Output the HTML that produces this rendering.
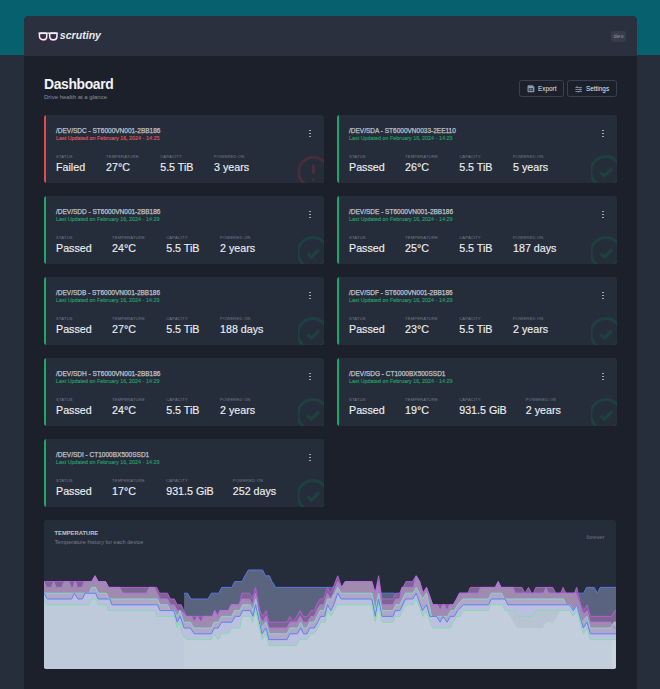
<!DOCTYPE html>
<html><head><meta charset="utf-8">
<style>
*{margin:0;padding:0;box-sizing:border-box}
html,body{width:660px;height:689px;overflow:hidden;background:#262d3b;font-family:"Liberation Sans",sans-serif}
.teal{position:absolute;left:0;top:0;width:660px;height:55.3px;background:#06606e}
.panel{position:absolute;left:24px;top:16px;width:613px;height:700px;background:#1c202b;border-radius:5px 5px 0 0;overflow:hidden}
.hdr{position:absolute;left:0;top:0;width:613px;height:40px;background:#2a303d}
.logo{position:absolute;left:35.8px;top:13px;font-weight:bold;font-style:italic;font-size:10.6px;color:#e8eaee}
.dev{position:absolute;left:587px;top:14.5px;width:15px;height:11.5px;background:#353c4a;border-radius:2px;color:#959ca8;font-size:5.8px;text-align:center;line-height:11.5px;letter-spacing:0.4px;text-indent:0.4px}
.title{position:absolute;left:20px;top:60.3px;font-size:13.9px;font-weight:bold;color:#f1f3f5;letter-spacing:-0.35px}
.sub{position:absolute;left:20px;top:78px;font-size:6px;color:#8a919d}
.btn{position:absolute;border:1px solid #394150;border-radius:2.5px;color:#e3e6ea;font-size:6.4px;line-height:14.3px}
.card{position:absolute;width:279.5px;height:67.5px;background:#262d3a;border-radius:3px;overflow:hidden}
.card .bl{position:absolute;left:0;top:0;width:2px;height:100%}
.card.f .bl{background:#e5484d}
.card.p .bl{background:#1ea76b}
.ct{position:absolute;left:12px;top:11.7px;font-size:6.5px;color:#bcc1ca;white-space:nowrap;-webkit-text-stroke:0.25px #bcc1ca}
.cu{position:absolute;left:12px;top:19.5px;font-size:5.4px;white-space:nowrap;-webkit-text-stroke:0.1px currentColor}
.card.f .cu{color:#e25a5f}
.card.p .cu{color:#25a46c}
.st{position:absolute;top:38.5px;left:12px;display:flex}
.st > div{margin-right:0}
.lb{font-size:4.1px;color:#737c8b;letter-spacing:0.2px;height:6px;line-height:6.4px;white-space:nowrap}
.vl{font-size:10.7px;color:#eceef1;white-space:nowrap;margin-top:1px;-webkit-text-stroke:0.15px #eceef1}
.keb{position:absolute;left:265px;top:14.7px;width:2px;height:8px}
.keb i{position:absolute;left:0;width:2px;height:1.6px;background:#b3b9c2;border-radius:1px}
.ico{position:absolute;left:252px;top:40px}
</style></head><body>
<div class="teal"></div>
<div class="panel">
  <div class="hdr">
    <svg style="position:absolute;left:13.5px;top:15.5px" width="21" height="10" viewBox="0 0 21 10"><g fill="none" stroke-width="1.3" stroke-linejoin="round"><g stroke="#d9475a" transform="translate(0.25,0.45)"><path d="M2.65 1.2 H7.55 Q8.75 1.2 8.75 2.6 V4.2 C8.75 6.5 7.15 7.75 5.10 7.75 C3.05 7.75 1.45 6.5 1.45 4.2 V2.6 Q1.45 1.2 2.65 1.2 Z"/><path d="M12.85 1.2 H17.75 Q18.95 1.2 18.95 2.6 V4.2 C18.95 6.5 17.35 7.75 15.30 7.75 C13.25 7.75 11.65 6.5 11.65 4.2 V2.6 Q11.65 1.2 12.85 1.2 Z"/></g><g stroke="#5a6ae0" transform="translate(-0.25,-0.35)"><path d="M2.65 1.2 H7.55 Q8.75 1.2 8.75 2.6 V4.2 C8.75 6.5 7.15 7.75 5.10 7.75 C3.05 7.75 1.45 6.5 1.45 4.2 V2.6 Q1.45 1.2 2.65 1.2 Z"/><path d="M12.85 1.2 H17.75 Q18.95 1.2 18.95 2.6 V4.2 C18.95 6.5 17.35 7.75 15.30 7.75 C13.25 7.75 11.65 6.5 11.65 4.2 V2.6 Q11.65 1.2 12.85 1.2 Z"/></g><g stroke="#f4f4f8"><path d="M2.65 1.2 H7.55 Q8.75 1.2 8.75 2.6 V4.2 C8.75 6.5 7.15 7.75 5.10 7.75 C3.05 7.75 1.45 6.5 1.45 4.2 V2.6 Q1.45 1.2 2.65 1.2 Z"/><path d="M12.85 1.2 H17.75 Q18.95 1.2 18.95 2.6 V4.2 C18.95 6.5 17.35 7.75 15.30 7.75 C13.25 7.75 11.65 6.5 11.65 4.2 V2.6 Q11.65 1.2 12.85 1.2 Z"/><path d="M0.4 1.2 H20.1" stroke-width="1.2"/></g></g></svg>
    <div class="logo">scrutiny</div>
    <div class="dev">dev</div>
  </div>
  <div class="title">Dashboard</div>
  <div class="sub">Drive health at a glance</div>
  <div class="btn" style="left:495px;top:64px;width:45px;height:17px"><svg style="position:absolute;left:6.5px;top:3.7px" width="8" height="8" viewBox="0 0 8 8"><path d="M0.5 1.2 Q0.5 0.2 1.5 0.2 H5.6 L7.4 2 V6.4 Q7.4 7.2 6.4 7.2 H1.5 Q0.5 7.2 0.5 6.2 Z" fill="#8a95a8"/><rect x="1.6" y="3.1" width="4.4" height="2.9" fill="#3a4152"/><rect x="2.6" y="1.9" width="2.6" height="0.6" fill="#aab4c6"/><circle cx="3.8" cy="4.6" r="0.7" fill="#9aa5b8"/></svg><span style="position:absolute;left:18px;top:0.8px">Export</span></div>
  <div class="btn" style="left:543px;top:64px;width:50px;height:17px"><svg style="position:absolute;left:6.5px;top:4px" width="8" height="8" viewBox="0 0 8 8" stroke="#8a95a8" stroke-width="0.8"><path d="M0.4 2.5 H7 M0.4 4.5 H7 M0.4 6.5 H7"/><path d="M2 1.3 V3.1 M5.1 3.6 V5.4 M3.2 5.9 V7.5" stroke-width="1.1"/></svg><span style="position:absolute;left:18px;top:0.8px">Settings</span></div>
</div>
<div class="card f" style="left:44px;top:115px"><div class="bl"></div><div class="ct">/DEV/SDC - ST6000VN001-2BB186</div><div class="cu">Last Updated on February 16, 2024 - 14:25</div><div style="position:absolute;left:12px;top:38.5px"><div class="lb">STATUS</div><div class="vl">Failed</div></div><div style="position:absolute;left:62px;top:38.5px"><div class="lb">TEMPERATURE</div><div class="vl">27°C</div></div><div style="position:absolute;left:116.2px;top:38.5px"><div class="lb">CAPACITY</div><div class="vl">5.5 TiB</div></div><div style="position:absolute;left:170px;top:38.5px"><div class="lb">POWERED ON</div><div class="vl">3 years</div></div><div class="keb"><i style="top:0"></i><i style="top:3px"></i><i style="top:6px"></i></div><svg class="ico" width="40" height="40" viewBox="0 0 40 40"><circle cx="17.5" cy="17" r="14.8" fill="none" stroke="#472e3a" stroke-width="3"/><rect x="16" y="9" width="3" height="10" rx="1.5" fill="#472e3a"/><circle cx="17.5" cy="24.5" r="1.6" fill="#472e3a"/></svg></div><div class="card p" style="left:337px;top:115px"><div class="bl"></div><div class="ct">/DEV/SDA - ST6000VN0033-2EE110</div><div class="cu">Last Updated on February 16, 2024 - 14:29</div><div style="position:absolute;left:12px;top:38.5px"><div class="lb">STATUS</div><div class="vl">Passed</div></div><div style="position:absolute;left:68px;top:38.5px"><div class="lb">TEMPERATURE</div><div class="vl">26°C</div></div><div style="position:absolute;left:122.2px;top:38.5px"><div class="lb">CAPACITY</div><div class="vl">5.5 TiB</div></div><div style="position:absolute;left:176px;top:38.5px"><div class="lb">POWERED ON</div><div class="vl">5 years</div></div><div class="keb"><i style="top:0"></i><i style="top:3px"></i><i style="top:6px"></i></div><svg class="ico" style="left:253.5px" width="40" height="40" viewBox="0 0 40 40"><circle cx="14.8" cy="16.6" r="15" fill="none" stroke="#1c413f" stroke-width="3"/><path d="M9.5 17.5 L13.5 21 L21 13.5" fill="none" stroke="#1c413f" stroke-width="3.2"/></svg></div><div class="card p" style="left:44px;top:196px"><div class="bl"></div><div class="ct">/DEV/SDD - ST6000VN001-2BB186</div><div class="cu">Last Updated on February 16, 2024 - 14:29</div><div style="position:absolute;left:12px;top:38.5px"><div class="lb">STATUS</div><div class="vl">Passed</div></div><div style="position:absolute;left:68px;top:38.5px"><div class="lb">TEMPERATURE</div><div class="vl">24°C</div></div><div style="position:absolute;left:122.2px;top:38.5px"><div class="lb">CAPACITY</div><div class="vl">5.5 TiB</div></div><div style="position:absolute;left:176px;top:38.5px"><div class="lb">POWERED ON</div><div class="vl">2 years</div></div><div class="keb"><i style="top:0"></i><i style="top:3px"></i><i style="top:6px"></i></div><svg class="ico" style="left:253.5px" width="40" height="40" viewBox="0 0 40 40"><circle cx="14.8" cy="16.6" r="15" fill="none" stroke="#1c413f" stroke-width="3"/><path d="M9.5 17.5 L13.5 21 L21 13.5" fill="none" stroke="#1c413f" stroke-width="3.2"/></svg></div><div class="card p" style="left:337px;top:196px"><div class="bl"></div><div class="ct">/DEV/SDE - ST6000VN001-2BB186</div><div class="cu">Last Updated on February 16, 2024 - 14:29</div><div style="position:absolute;left:12px;top:38.5px"><div class="lb">STATUS</div><div class="vl">Passed</div></div><div style="position:absolute;left:68px;top:38.5px"><div class="lb">TEMPERATURE</div><div class="vl">25°C</div></div><div style="position:absolute;left:122.2px;top:38.5px"><div class="lb">CAPACITY</div><div class="vl">5.5 TiB</div></div><div style="position:absolute;left:176px;top:38.5px"><div class="lb">POWERED ON</div><div class="vl">187 days</div></div><div class="keb"><i style="top:0"></i><i style="top:3px"></i><i style="top:6px"></i></div><svg class="ico" style="left:253.5px" width="40" height="40" viewBox="0 0 40 40"><circle cx="14.8" cy="16.6" r="15" fill="none" stroke="#1c413f" stroke-width="3"/><path d="M9.5 17.5 L13.5 21 L21 13.5" fill="none" stroke="#1c413f" stroke-width="3.2"/></svg></div><div class="card p" style="left:44px;top:277px"><div class="bl"></div><div class="ct">/DEV/SDB - ST6000VN001-2BB186</div><div class="cu">Last Updated on February 16, 2024 - 14:29</div><div style="position:absolute;left:12px;top:38.5px"><div class="lb">STATUS</div><div class="vl">Passed</div></div><div style="position:absolute;left:68px;top:38.5px"><div class="lb">TEMPERATURE</div><div class="vl">27°C</div></div><div style="position:absolute;left:122.2px;top:38.5px"><div class="lb">CAPACITY</div><div class="vl">5.5 TiB</div></div><div style="position:absolute;left:176px;top:38.5px"><div class="lb">POWERED ON</div><div class="vl">188 days</div></div><div class="keb"><i style="top:0"></i><i style="top:3px"></i><i style="top:6px"></i></div><svg class="ico" style="left:253.5px" width="40" height="40" viewBox="0 0 40 40"><circle cx="14.8" cy="16.6" r="15" fill="none" stroke="#1c413f" stroke-width="3"/><path d="M9.5 17.5 L13.5 21 L21 13.5" fill="none" stroke="#1c413f" stroke-width="3.2"/></svg></div><div class="card p" style="left:337px;top:277px"><div class="bl"></div><div class="ct">/DEV/SDF - ST6000VN001-2BB186</div><div class="cu">Last Updated on February 16, 2024 - 14:29</div><div style="position:absolute;left:12px;top:38.5px"><div class="lb">STATUS</div><div class="vl">Passed</div></div><div style="position:absolute;left:68px;top:38.5px"><div class="lb">TEMPERATURE</div><div class="vl">23°C</div></div><div style="position:absolute;left:122.2px;top:38.5px"><div class="lb">CAPACITY</div><div class="vl">5.5 TiB</div></div><div style="position:absolute;left:176px;top:38.5px"><div class="lb">POWERED ON</div><div class="vl">2 years</div></div><div class="keb"><i style="top:0"></i><i style="top:3px"></i><i style="top:6px"></i></div><svg class="ico" style="left:253.5px" width="40" height="40" viewBox="0 0 40 40"><circle cx="14.8" cy="16.6" r="15" fill="none" stroke="#1c413f" stroke-width="3"/><path d="M9.5 17.5 L13.5 21 L21 13.5" fill="none" stroke="#1c413f" stroke-width="3.2"/></svg></div><div class="card p" style="left:44px;top:358px"><div class="bl"></div><div class="ct">/DEV/SDH - ST6000VN001-2BB186</div><div class="cu">Last Updated on February 16, 2024 - 14:29</div><div style="position:absolute;left:12px;top:38.5px"><div class="lb">STATUS</div><div class="vl">Passed</div></div><div style="position:absolute;left:68px;top:38.5px"><div class="lb">TEMPERATURE</div><div class="vl">24°C</div></div><div style="position:absolute;left:122.2px;top:38.5px"><div class="lb">CAPACITY</div><div class="vl">5.5 TiB</div></div><div style="position:absolute;left:176px;top:38.5px"><div class="lb">POWERED ON</div><div class="vl">2 years</div></div><div class="keb"><i style="top:0"></i><i style="top:3px"></i><i style="top:6px"></i></div><svg class="ico" style="left:253.5px" width="40" height="40" viewBox="0 0 40 40"><circle cx="14.8" cy="16.6" r="15" fill="none" stroke="#1c413f" stroke-width="3"/><path d="M9.5 17.5 L13.5 21 L21 13.5" fill="none" stroke="#1c413f" stroke-width="3.2"/></svg></div><div class="card p" style="left:337px;top:358px"><div class="bl"></div><div class="ct">/DEV/SDG - CT1000BX500SSD1</div><div class="cu">Last Updated on February 16, 2024 - 14:29</div><div style="position:absolute;left:12px;top:38.5px"><div class="lb">STATUS</div><div class="vl">Passed</div></div><div style="position:absolute;left:68px;top:38.5px"><div class="lb">TEMPERATURE</div><div class="vl">19°C</div></div><div style="position:absolute;left:122.2px;top:38.5px"><div class="lb">CAPACITY</div><div class="vl">931.5 GiB</div></div><div style="position:absolute;left:188.8px;top:38.5px"><div class="lb">POWERED ON</div><div class="vl">2 years</div></div><div class="keb"><i style="top:0"></i><i style="top:3px"></i><i style="top:6px"></i></div><svg class="ico" style="left:253.5px" width="40" height="40" viewBox="0 0 40 40"><circle cx="14.8" cy="16.6" r="15" fill="none" stroke="#1c413f" stroke-width="3"/><path d="M9.5 17.5 L13.5 21 L21 13.5" fill="none" stroke="#1c413f" stroke-width="3.2"/></svg></div><div class="card p" style="left:44px;top:439px"><div class="bl"></div><div class="ct">/DEV/SDI - CT1000BX500SSD1</div><div class="cu">Last Updated on February 16, 2024 - 14:29</div><div style="position:absolute;left:12px;top:38.5px"><div class="lb">STATUS</div><div class="vl">Passed</div></div><div style="position:absolute;left:68px;top:38.5px"><div class="lb">TEMPERATURE</div><div class="vl">17°C</div></div><div style="position:absolute;left:122.2px;top:38.5px"><div class="lb">CAPACITY</div><div class="vl">931.5 GiB</div></div><div style="position:absolute;left:188.8px;top:38.5px"><div class="lb">POWERED ON</div><div class="vl">252 days</div></div><div class="keb"><i style="top:0"></i><i style="top:3px"></i><i style="top:6px"></i></div><svg class="ico" style="left:253.5px" width="40" height="40" viewBox="0 0 40 40"><circle cx="14.8" cy="16.6" r="15" fill="none" stroke="#1c413f" stroke-width="3"/><path d="M9.5 17.5 L13.5 21 L21 13.5" fill="none" stroke="#1c413f" stroke-width="3.2"/></svg></div><div style="position:absolute;left:44px;top:519.5px;width:572px;height:149.5px;background:#262d3a;border-radius:3px;overflow:hidden">
<div style="position:absolute;left:10.5px;top:10.8px;font-size:5.8px;font-weight:bold;color:#bfc4cc;letter-spacing:0px">TEMPERATURE</div>
<div style="position:absolute;left:10.5px;top:19.3px;font-size:5.6px;color:#757d8b">Temperature history for each device</div>
<div style="position:absolute;left:542.6px;top:14.3px;font-size:5.7px;color:#6f7785">forever</div>
</div>
<svg style="position:absolute;left:0;top:0" width="660" height="689" viewBox="0 0 660 689"><defs><clipPath id="cc"><rect x="44" y="519.5" width="572" height="149.5" rx="3"/></clipPath></defs><g clip-path="url(#cc)">
<clipPath id="ce"><polygon points="44.0,670 44.0,599.0 46.8,604.8 89.2,604.8 91.3,599.0 96.0,599.0 98.7,604.8 106.2,604.8 108.8,610.6 155.0,610.6 157.3,616.4 174.3,616.4 177.2,628.0 179.5,622.2 182.0,633.8 186.4,639.6 211.4,639.6 214.2,633.8 218.2,639.6 221.6,633.8 228.4,633.8 231.2,628.0 239.8,628.0 242.0,616.4 250.1,616.4 252.4,622.2 255.8,610.6 262.0,639.6 266.0,633.8 268.9,645.4 296.7,645.4 299.5,639.6 307.0,639.6 310.9,633.8 314.3,633.8 317.7,628.0 320.7,622.2 325.2,622.2 327.5,610.6 330.9,616.4 337.2,604.8 371.8,604.8 375.2,622.2 378.6,604.8 382.0,622.2 393.0,622.2 395.2,616.4 399.8,616.4 405.5,604.8 412.8,604.8 416.2,599.0 423.0,616.4 425.9,610.6 432.7,628.0 450.3,628.0 453.2,622.2 456.6,616.4 460.0,616.4 463.0,610.6 488.0,610.6 490.8,604.8 502.7,604.8 505.0,610.6 515.2,610.6 518.6,616.4 533.0,616.4 535.2,610.6 569.9,610.6 573.3,616.4 576.7,610.6 583.5,633.8 587.0,628.0 590.3,639.6 616.0,639.6 616.0,670"/></clipPath>
<polygon points="184.1,670 184.1,593.2 187.5,593.2 190.9,599.0 208.0,599.0 211.4,593.2 218.8,593.2 221.6,587.4 231.8,587.4 234.7,581.6 242.0,581.6 244.9,575.8 248.4,570.0 262.6,570.0 265.5,575.8 269.4,575.8 272.0,581.6 275.7,587.4 354.8,587.4 357.6,593.2 394.7,593.2 400.0,610.6 575.0,610.6 578.4,593.2 583.8,593.2 586.5,587.4 594.2,587.4 597.4,593.2 600.2,587.4 616.0,587.4 616.0,670" fill="#5b647e"/>
<polyline points="184.1,593.2 187.5,593.2 190.9,599.0 208.0,599.0 211.4,593.2 218.8,593.2 221.6,587.4 231.8,587.4 234.7,581.6 242.0,581.6 244.9,575.8 248.4,570.0 262.6,570.0 265.5,575.8 269.4,575.8 272.0,581.6 275.7,587.4 354.8,587.4 357.6,593.2 394.7,593.2 400.0,610.6 575.0,610.6 578.4,593.2 583.8,593.2 586.5,587.4 594.2,587.4 597.4,593.2 600.2,587.4 616.0,587.4" fill="none" stroke="#5a78e0" stroke-width="1" stroke-linejoin="round"/>
<polygon points="44.0,670 44.0,581.6 91.8,581.6 95.0,575.8 98.2,581.6 105.6,581.6 108.6,587.4 156.7,587.4 159.5,593.2 167.5,593.2 170.3,599.0 174.3,599.0 177.2,604.8 181.2,604.8 186.4,616.4 212.5,616.4 214.8,610.6 217.6,616.4 219.9,610.6 228.4,610.6 231.2,604.8 239.2,604.8 242.0,593.2 249.5,593.2 252.4,599.0 255.5,587.4 259.8,610.6 262.6,616.4 266.0,610.6 268.9,622.2 287.0,622.2 289.9,616.4 293.3,622.2 296.7,616.4 300.1,610.6 303.5,616.4 307.5,616.4 310.9,610.6 314.3,610.6 316.6,604.8 320.1,599.0 323.5,599.0 327.5,587.4 330.3,593.2 333.2,587.4 337.7,575.8 341.7,587.4 345.1,581.6 371.8,581.6 375.2,593.2 378.6,575.8 382.0,599.0 393.0,599.0 395.8,593.2 399.8,593.2 402.0,587.4 403.0,587.4 406.0,581.6 412.3,581.6 416.2,575.8 419.7,581.6 423.0,593.2 426.5,587.4 432.7,604.8 453.2,604.8 456.6,599.0 459.5,593.2 468.0,593.2 470.3,587.4 495.3,587.4 498.2,581.6 501.0,587.4 522.0,587.4 524.9,593.2 528.5,587.4 531.5,593.2 533.5,593.2 535.8,587.4 552.8,587.4 555.7,593.2 560.8,593.2 563.0,587.4 565.9,593.2 574.4,593.2 576.7,587.4 580.7,604.8 583.8,610.6 587.1,604.8 590.3,616.4 611.6,616.4 614.9,610.6 616.0,610.6 616.0,670" fill="#7a668e"/>
<polygon points="44.0,670 44.0,581.6 46.8,587.4 51.0,587.4 53.7,581.6 56.3,587.4 61.6,587.4 64.3,581.6 69.0,581.6 71.2,587.4 72.8,587.4 74.9,581.6 75.4,581.6 77.5,587.4 81.8,587.4 84.4,581.6 91.8,581.6 95.0,575.8 98.2,581.6 105.6,581.6 108.6,587.4 119.8,587.4 122.6,593.2 146.5,593.2 149.3,587.4 154.4,587.4 160.0,599.0 167.5,599.0 170.3,604.8 174.3,604.8 177.2,610.6 181.2,610.6 186.4,616.4 191.5,616.4 194.3,622.2 197.2,616.4 201.1,622.2 203.4,616.4 212.5,616.4 214.8,610.6 217.6,616.4 219.9,610.6 228.4,610.6 231.2,604.8 239.2,604.8 242.0,599.0 249.5,599.0 252.4,604.8 255.5,593.2 259.8,616.4 262.6,622.2 266.0,616.4 268.9,628.0 287.0,628.0 289.9,622.2 297.0,622.2 300.1,616.4 303.5,622.2 307.5,622.2 310.9,616.4 314.3,616.4 316.6,610.6 320.1,604.8 323.5,604.8 327.5,593.2 330.3,599.0 333.2,593.2 337.7,581.6 341.7,587.4 345.1,581.6 371.8,581.6 375.2,593.2 378.6,581.6 382.0,604.8 393.0,604.8 395.8,599.0 399.8,599.0 402.0,587.4 413.4,587.4 416.2,575.8 419.7,581.6 423.0,593.2 426.5,587.4 432.7,604.8 437.6,604.8 440.1,610.6 442.6,604.8 444.5,604.8 447.0,610.6 449.5,604.8 453.2,604.8 456.6,599.0 459.5,593.2 478.3,593.2 480.6,587.4 495.3,587.4 498.2,581.6 501.0,587.4 513.0,587.4 515.2,593.2 543.5,593.2 546.0,587.4 548.5,593.2 576.0,593.2 581.8,610.6 584.0,614.1 587.1,610.6 590.3,622.2 611.0,622.2 614.0,628.0 616.0,628.0 616.0,670" fill="#a08aae"/>
<polygon points="44.0,670 44.0,593.2 89.2,593.2 91.8,587.4 95.5,587.4 98.2,593.2 106.2,593.2 109.5,599.0 157.3,599.0 160.1,604.8 167.5,604.8 170.3,610.6 174.3,610.6 177.3,616.4 180.1,610.6 183.5,622.2 190.3,622.2 193.8,628.0 211.4,628.0 214.2,622.2 218.8,622.2 221.6,616.4 231.8,616.4 234.7,610.6 239.8,610.6 242.6,604.8 250.1,604.8 253.0,610.6 255.8,599.0 260.9,628.0 266.0,622.2 269.4,633.8 287.0,633.8 289.9,628.0 297.8,628.0 300.7,622.2 303.5,628.0 307.0,628.0 309.8,622.2 314.3,622.2 317.2,616.4 320.1,610.6 324.2,610.6 327.5,599.0 331.5,599.0 334.9,593.2 337.7,587.4 341.1,593.2 371.8,593.2 375.2,610.6 378.6,593.2 382.0,610.6 393.0,610.6 395.8,604.8 399.8,604.8 405.5,593.2 412.8,593.2 416.2,587.4 422.5,599.0 426.5,593.2 431.6,616.4 447.5,616.4 450.9,610.6 454.3,610.6 457.7,604.8 463.0,599.0 488.5,599.0 491.4,593.2 501.6,593.2 504.4,599.0 563.6,599.0 565.9,604.8 570.0,604.8 573.9,610.6 576.7,604.8 581.8,622.2 586.9,616.4 590.3,628.0 611.0,628.0 613.8,622.2 616.0,622.2 616.0,670" fill="#b0a8c6"/>
<polygon points="44.0,670 44.0,593.2 47.3,599.0 71.7,599.0 74.3,593.2 78.0,599.0 82.3,599.0 85.0,593.2 95.5,593.2 98.2,599.0 109.9,599.0 112.0,604.8 157.3,604.8 160.1,610.6 173.8,610.6 177.2,622.2 180.1,616.4 184.1,628.0 190.3,628.0 194.3,633.8 211.4,633.8 214.2,628.0 218.2,628.0 221.6,622.2 231.8,622.2 235.2,616.4 239.8,616.4 242.6,610.6 250.1,610.6 253.0,616.4 255.5,604.8 262.0,633.8 266.0,628.0 268.9,639.6 287.0,639.6 289.9,633.8 297.3,633.8 300.7,628.0 303.5,633.8 307.0,633.8 309.8,628.0 314.3,628.0 317.7,622.2 320.7,616.4 324.7,616.4 327.5,604.8 330.9,610.6 333.8,604.8 337.7,593.2 341.1,599.0 371.8,599.0 375.2,616.4 378.6,599.0 382.0,616.4 393.0,616.4 395.2,610.6 399.8,610.6 405.5,599.0 412.8,599.0 416.2,593.2 422.5,610.6 426.5,604.8 429.9,616.4 436.7,616.4 440.1,622.2 443.0,616.4 447.0,622.2 450.3,616.4 454.3,616.4 457.7,610.6 463.5,604.8 488.5,604.8 491.4,599.0 505.0,599.0 507.8,604.8 569.3,604.8 573.3,610.6 576.7,604.8 583.3,628.0 587.0,622.2 590.3,633.8 616.0,633.8 616.0,670" fill="#bcc0e0"/>
<polygon points="44.0,670 44.0,599.0 46.8,604.8 89.2,604.8 91.3,599.0 96.0,599.0 98.7,604.8 106.2,604.8 108.8,610.6 155.0,610.6 157.3,616.4 174.3,616.4 177.2,628.0 179.5,622.2 182.0,633.8 186.4,639.6 211.4,639.6 214.2,633.8 218.2,639.6 221.6,633.8 228.4,633.8 231.2,628.0 239.8,628.0 242.0,616.4 250.1,616.4 252.4,622.2 255.8,610.6 262.0,639.6 266.0,633.8 268.9,645.4 296.7,645.4 299.5,639.6 307.0,639.6 310.9,633.8 314.3,633.8 317.7,628.0 320.7,622.2 325.2,622.2 327.5,610.6 330.9,616.4 337.2,604.8 371.8,604.8 375.2,622.2 378.6,604.8 382.0,622.2 393.0,622.2 395.2,616.4 399.8,616.4 405.5,604.8 412.8,604.8 416.2,599.0 423.0,616.4 425.9,610.6 432.7,628.0 450.3,628.0 453.2,622.2 456.6,616.4 460.0,616.4 463.0,610.6 488.0,610.6 490.8,604.8 502.7,604.8 505.0,610.6 515.2,610.6 518.6,616.4 533.0,616.4 535.2,610.6 569.9,610.6 573.3,616.4 576.7,610.6 583.5,633.8 587.0,628.0 590.3,639.6 616.0,639.6 616.0,670" fill="#becad9"/>
<rect x="184" y="560" width="432" height="110" fill="#ffffff" fill-opacity="0.075" clip-path="url(#ce)"/>
<polygon points="505.0,610.6 515.2,610.6 518.6,616.4 533.0,616.4 535.2,610.6 560.0,610.6 557.0,616.4 553.6,622.2 546.0,622.2 542.7,628.0 517.0,628.0 506.5,610.6" fill="#b9c4d2"/>
<rect x="611.5" y="600" width="5" height="70" fill="#ffffff" fill-opacity="0.12" clip-path="url(#ce)"/>
<polyline points="44.0,581.6 91.8,581.6 95.0,575.8 98.2,581.6 105.6,581.6 108.6,587.4 156.7,587.4 159.5,593.2 167.5,593.2 170.3,599.0 174.3,599.0 177.2,604.8 181.2,604.8 186.4,616.4 212.5,616.4 214.8,610.6 217.6,616.4 219.9,610.6 228.4,610.6 231.2,604.8 239.2,604.8 242.0,593.2 249.5,593.2 252.4,599.0 255.5,587.4 259.8,610.6 262.6,616.4 266.0,610.6 268.9,622.2 287.0,622.2 289.9,616.4 293.3,622.2 296.7,616.4 300.1,610.6 303.5,616.4 307.5,616.4 310.9,610.6 314.3,610.6 316.6,604.8 320.1,599.0 323.5,599.0 327.5,587.4 330.3,593.2 333.2,587.4 337.7,575.8 341.7,587.4 345.1,581.6 371.8,581.6 375.2,593.2 378.6,575.8 382.0,599.0 393.0,599.0 395.8,593.2 399.8,593.2 402.0,587.4 403.0,587.4 406.0,581.6 412.3,581.6 416.2,575.8 419.7,581.6 423.0,593.2 426.5,587.4 432.7,604.8 453.2,604.8 456.6,599.0 459.5,593.2 468.0,593.2 470.3,587.4 495.3,587.4 498.2,581.6 501.0,587.4 522.0,587.4 524.9,593.2 528.5,587.4 531.5,593.2 533.5,593.2 535.8,587.4 552.8,587.4 555.7,593.2 560.8,593.2 563.0,587.4 565.9,593.2 574.4,593.2 576.7,587.4 580.7,604.8 583.8,610.6 587.1,604.8 590.3,616.4 611.6,616.4 614.9,610.6 616.0,610.6" fill="none" stroke="#bc58dc" stroke-width="1" stroke-linejoin="round"/>
<polyline points="44.0,581.6 46.8,587.4 51.0,587.4 53.7,581.6 56.3,587.4 61.6,587.4 64.3,581.6 69.0,581.6 71.2,587.4 72.8,587.4 74.9,581.6 75.4,581.6 77.5,587.4 81.8,587.4 84.4,581.6 91.8,581.6 95.0,575.8 98.2,581.6 105.6,581.6 108.6,587.4 119.8,587.4 122.6,593.2 146.5,593.2 149.3,587.4 154.4,587.4 160.0,599.0 167.5,599.0 170.3,604.8 174.3,604.8 177.2,610.6 181.2,610.6 186.4,616.4 191.5,616.4 194.3,622.2 197.2,616.4 201.1,622.2 203.4,616.4 212.5,616.4 214.8,610.6 217.6,616.4 219.9,610.6 228.4,610.6 231.2,604.8 239.2,604.8 242.0,599.0 249.5,599.0 252.4,604.8 255.5,593.2 259.8,616.4 262.6,622.2 266.0,616.4 268.9,628.0 287.0,628.0 289.9,622.2 297.0,622.2 300.1,616.4 303.5,622.2 307.5,622.2 310.9,616.4 314.3,616.4 316.6,610.6 320.1,604.8 323.5,604.8 327.5,593.2 330.3,599.0 333.2,593.2 337.7,581.6 341.7,587.4 345.1,581.6 371.8,581.6 375.2,593.2 378.6,581.6 382.0,604.8 393.0,604.8 395.8,599.0 399.8,599.0 402.0,587.4 413.4,587.4 416.2,575.8 419.7,581.6 423.0,593.2 426.5,587.4 432.7,604.8 437.6,604.8 440.1,610.6 442.6,604.8 444.5,604.8 447.0,610.6 449.5,604.8 453.2,604.8 456.6,599.0 459.5,593.2 478.3,593.2 480.6,587.4 495.3,587.4 498.2,581.6 501.0,587.4 513.0,587.4 515.2,593.2 543.5,593.2 546.0,587.4 548.5,593.2 576.0,593.2 581.8,610.6 584.0,614.1 587.1,610.6 590.3,622.2 611.0,622.2 614.0,628.0 616.0,628.0" fill="none" stroke="#b277e0" stroke-width="1" stroke-linejoin="round"/>
<polyline points="44.0,593.2 89.2,593.2 91.8,587.4 95.5,587.4 98.2,593.2 106.2,593.2 109.5,599.0 157.3,599.0 160.1,604.8 167.5,604.8 170.3,610.6 174.3,610.6 177.3,616.4 180.1,610.6 183.5,622.2 190.3,622.2 193.8,628.0 211.4,628.0 214.2,622.2 218.8,622.2 221.6,616.4 231.8,616.4 234.7,610.6 239.8,610.6 242.6,604.8 250.1,604.8 253.0,610.6 255.8,599.0 260.9,628.0 266.0,622.2 269.4,633.8 287.0,633.8 289.9,628.0 297.8,628.0 300.7,622.2 303.5,628.0 307.0,628.0 309.8,622.2 314.3,622.2 317.2,616.4 320.1,610.6 324.2,610.6 327.5,599.0 331.5,599.0 334.9,593.2 337.7,587.4 341.1,593.2 371.8,593.2 375.2,610.6 378.6,593.2 382.0,610.6 393.0,610.6 395.8,604.8 399.8,604.8 405.5,593.2 412.8,593.2 416.2,587.4 422.5,599.0 426.5,593.2 431.6,616.4 447.5,616.4 450.9,610.6 454.3,610.6 457.7,604.8 463.0,599.0 488.5,599.0 491.4,593.2 501.6,593.2 504.4,599.0 563.6,599.0 565.9,604.8 570.0,604.8 573.9,610.6 576.7,604.8 581.8,622.2 586.9,616.4 590.3,628.0 611.0,628.0 613.8,622.2 616.0,622.2" fill="none" stroke="#86d6d2" stroke-width="1" stroke-linejoin="round"/>
<polyline points="44.0,593.2 47.3,599.0 71.7,599.0 74.3,593.2 78.0,599.0 82.3,599.0 85.0,593.2 95.5,593.2 98.2,599.0 109.9,599.0 112.0,604.8 157.3,604.8 160.1,610.6 173.8,610.6 177.2,622.2 180.1,616.4 184.1,628.0 190.3,628.0 194.3,633.8 211.4,633.8 214.2,628.0 218.2,628.0 221.6,622.2 231.8,622.2 235.2,616.4 239.8,616.4 242.6,610.6 250.1,610.6 253.0,616.4 255.5,604.8 262.0,633.8 266.0,628.0 268.9,639.6 287.0,639.6 289.9,633.8 297.3,633.8 300.7,628.0 303.5,633.8 307.0,633.8 309.8,628.0 314.3,628.0 317.7,622.2 320.7,616.4 324.7,616.4 327.5,604.8 330.9,610.6 333.8,604.8 337.7,593.2 341.1,599.0 371.8,599.0 375.2,616.4 378.6,599.0 382.0,616.4 393.0,616.4 395.2,610.6 399.8,610.6 405.5,599.0 412.8,599.0 416.2,593.2 422.5,610.6 426.5,604.8 429.9,616.4 436.7,616.4 440.1,622.2 443.0,616.4 447.0,622.2 450.3,616.4 454.3,616.4 457.7,610.6 463.5,604.8 488.5,604.8 491.4,599.0 505.0,599.0 507.8,604.8 569.3,604.8 573.3,610.6 576.7,604.8 583.3,628.0 587.0,622.2 590.3,633.8 616.0,633.8" fill="none" stroke="#5f80ee" stroke-width="1" stroke-linejoin="round"/>
<polyline points="44.0,599.0 46.8,604.8 89.2,604.8 91.3,599.0 96.0,599.0 98.7,604.8 106.2,604.8 108.8,610.6 155.0,610.6 157.3,616.4 174.3,616.4 177.2,628.0 179.5,622.2 182.0,633.8 186.4,639.6 211.4,639.6 214.2,633.8 218.2,639.6 221.6,633.8 228.4,633.8 231.2,628.0 239.8,628.0 242.0,616.4 250.1,616.4 252.4,622.2 255.8,610.6 262.0,639.6 266.0,633.8 268.9,645.4 296.7,645.4 299.5,639.6 307.0,639.6 310.9,633.8 314.3,633.8 317.7,628.0 320.7,622.2 325.2,622.2 327.5,610.6 330.9,616.4 337.2,604.8 371.8,604.8 375.2,622.2 378.6,604.8 382.0,622.2 393.0,622.2 395.2,616.4 399.8,616.4 405.5,604.8 412.8,604.8 416.2,599.0 423.0,616.4 425.9,610.6 432.7,628.0 450.3,628.0 453.2,622.2 456.6,616.4 460.0,616.4 463.0,610.6 488.0,610.6 490.8,604.8 502.7,604.8 505.0,610.6 515.2,610.6 518.6,616.4 533.0,616.4 535.2,610.6 569.9,610.6 573.3,616.4 576.7,610.6 583.5,633.8 587.0,628.0 590.3,639.6 616.0,639.6" fill="none" stroke="#86dab0" stroke-width="1" stroke-linejoin="round"/>
</g></svg>

</body></html>
